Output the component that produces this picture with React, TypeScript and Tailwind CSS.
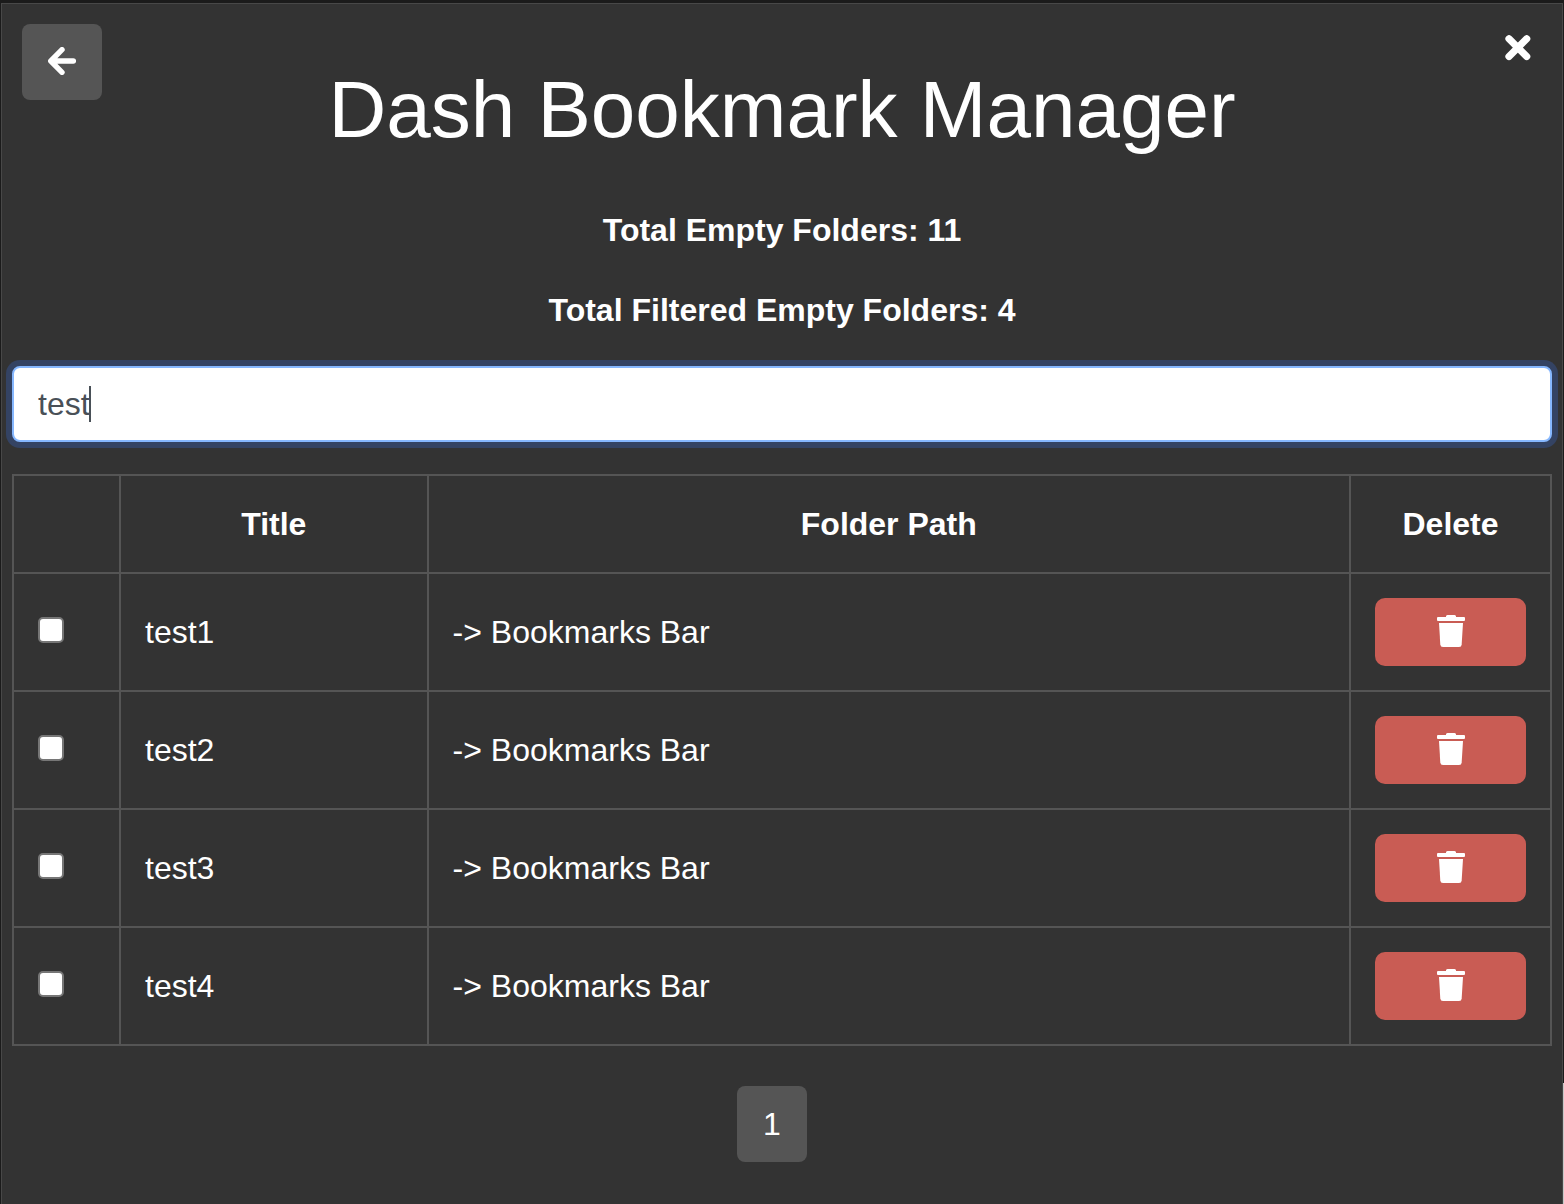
import { useState } from "react";

const folders = ["test1", "test2", "test3", "test4"].map((title) => ({
  title,
  path: "-> Bookmarks Bar",
}));

function ArrowIcon() {
  return (
    <svg
      viewBox="0 0 28 28"
      className="mb-[2px] size-7"
      fill="none"
      stroke="currentColor"
      strokeWidth="5.4"
      strokeLinecap="round"
      strokeLinejoin="round"
      aria-hidden="true"
    >
      <path d="M14 2.7 2.8 14 14 25.3M3 14h22.4" />
    </svg>
  );
}

function CrossIcon() {
  return (
    <svg
      viewBox="0 0 26 26"
      className="size-[26px]"
      fill="none"
      stroke="currentColor"
      strokeWidth="7.2"
      strokeLinecap="round"
      aria-hidden="true"
    >
      <path d="M4 3.8 21.7 21.5M21.7 3.8 4 21.5" />
    </svg>
  );
}

function TrashIcon() {
  return (
    <svg viewBox="0 0 28 32" className="mb-[2px] h-8 w-7" fill="currentColor" aria-hidden="true">
      <path d="M9 2V1.2Q9.4 0 10.6 0h6.8Q18.6 0 19 1.2V2h8q1 0 1 1v2q0 1-1 1H1Q0 6 0 5V3q0-1 1-1z" />
      <path d="M2 8h24l-1.3 21.4Q24.5 32 22 32H6Q3.500 32 3.300 29.400z" />
    </svg>
  );
}

function Header() {
  return (
    <header className="grid grid-cols-[80px_1fr_80px] items-start px-[10px]">
      <button
        type="button"
        aria-label="Back"
        className="flex h-[76px] w-20 items-center justify-center rounded-lg bg-[#555555]"
      >
        <ArrowIcon />
      </button>
      <h1 className="mt-[38px] text-center text-[80px] leading-[96px]">Dash Bookmark Manager</h1>
      <button
        type="button"
        aria-label="Close"
        className="mr-1 mt-1 flex size-10 items-center justify-center justify-self-end"
      >
        <CrossIcon />
      </button>
    </header>
  );
}

function SearchBox() {
  const [query, setQuery] = useState("test");
  return (
    <div className="relative mt-8">
      <input
        type="text"
        aria-label="Filter folders"
        value={query}
        onChange={(event) => setQuery(event.target.value)}
        className="block h-[76px] w-full rounded-lg border-2 border-[#86b7fe] bg-white px-6 text-[#495057] caret-transparent shadow-[0_0_0_6px_#344363] outline-none"
      />
      <span className="pointer-events-none absolute left-[26px] top-5 flex h-9" aria-hidden="true">
        <span className="invisible whitespace-pre">{query}</span>
        <span className="-ml-px w-[2px] bg-[#495057]" />
      </span>
    </div>
  );
}

function FolderTable() {
  const cell = "border-2 border-[#555555] p-6";
  return (
    <table className="mt-8 w-full table-fixed border-collapse">
      <colgroup>
        <col className="w-[107px]" />
        <col className="w-1/5" />
        <col />
        <col className="w-[201px]" />
      </colgroup>
      <thead>
        <tr>
          <td className={cell} />
          <th className={cell}>Title</th>
          <th className={cell}>Folder Path</th>
          <th className={cell}>Delete</th>
        </tr>
      </thead>
      <tbody>
        {folders.map(({ title, path }) => (
          <tr key={title}>
            <td className={cell}>
              <input
                type="checkbox"
                aria-label={`Select ${title}`}
                className="mb-1 block size-[26px] appearance-none rounded-[5px] border-2 border-[#767676] bg-white checked:bg-[#0075ff]"
              />
            </td>
            <td className={cell}>{title}</td>
            <td className={cell}>{path}</td>
            <td className={cell}>
              <button
                type="button"
                aria-label={`Delete ${title}`}
                className="flex h-[68px] w-full items-center justify-center rounded-[10px] bg-[#c95c54]"
              >
                <TrashIcon />
              </button>
            </td>
          </tr>
        ))}
      </tbody>
    </table>
  );
}

export default function App() {
  return (
    <div className="flex min-h-screen bg-[#1b1b1b] pl-px pt-[3px] font-['Liberation_Sans',Arial,sans-serif] text-[32px] leading-[48px] text-white">
      <main className="flex-1 border-x border-t border-[#484848] bg-[#333333] px-[10px] pb-10 pt-5">
        <Header />
        <p className="mt-12 text-center font-bold">Total Empty Folders: 11</p>
        <p className="mt-8 text-center font-bold">Total Filtered Empty Folders: 4</p>
        <SearchBox />
        <FolderTable />
        <nav aria-label="Pages" className="mr-5 mt-10 flex justify-center">
          <button type="button" className="h-[76px] w-[70px] rounded-lg bg-[#555555]">
            1
          </button>
        </nav>
      </main>
      <div className="flex w-px flex-col" aria-hidden="true">
        <div className="flex-1" />
        <div className="h-[121px] bg-[#c8c8c8]" />
      </div>
    </div>
  );
}
